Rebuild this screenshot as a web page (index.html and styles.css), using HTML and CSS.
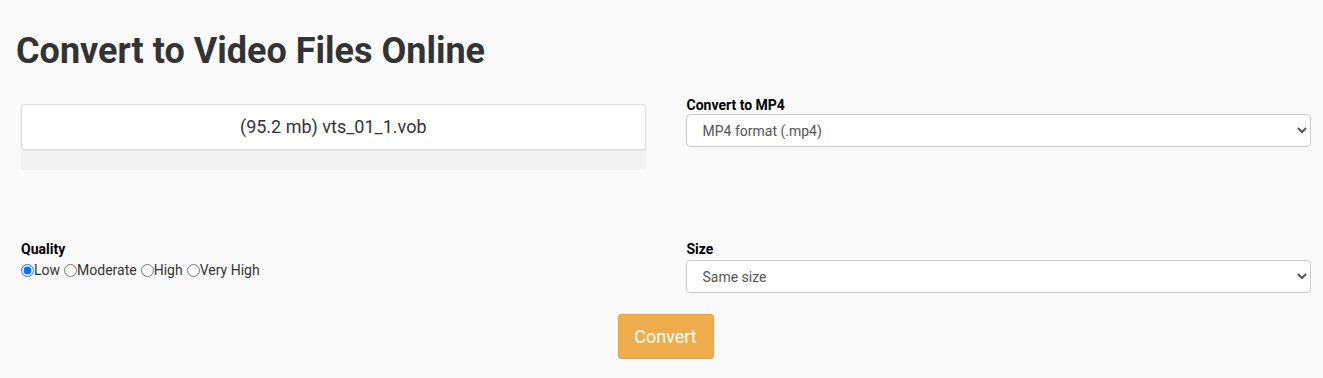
FILE: index.html
```html
<!DOCTYPE html>
<html lang="en">
<head>
  <meta charset="UTF-8" />
  <meta name="viewport" content="width=device-width, initial-scale=1" />
  <title>Convert to Video Files Online</title>
  <link rel="stylesheet" href="styles.css">
</head>
<body>
  <div class="page">
    <h1 class="title">Convert to Video Files Online</h1>

    <div class="grid">
      <!-- Upload file -->
      <div class="col col-file">
        <div class="file-box">(95.2 mb) vts_01_1.vob</div>
        <div class="progress"></div>
      </div>

      <div class="col">
        <label class="lbl" for="fmt">Convert to MP4</label>
        <select id="fmt" class="sel">
          <option>MP4 format (.mp4)</option>
        </select>
      </div>

      <!-- Options -->
      <div class="col col-opt">
        <div class="lbl">Quality</div>
        <div class="radios">
          <label><input type="radio" name="q" checked>Low</label>
          <label><input type="radio" name="q">Moderate</label>
          <label><input type="radio" name="q">High</label>
          <label><input type="radio" name="q">Very High</label>
        </div>
      </div>

      <div class="col col-opt">
        <label class="lbl" for="size">Size</label>
        <select id="size" class="sel">
          <option>Same size</option>
        </select>
      </div>
    </div>

    <div class="actions">
      <button class="btn">Convert</button>
    </div>
  </div>
</body>
</html>
```

FILE: styles.css
```css
body {
  margin: 0;
  background: #fafafa;
  font-family: Roboto, 'Liberation Sans', sans-serif;
  color: #333;
}
.page {
  padding: 0 12px 0 21px;
}
.title {
  margin: 0 0 0 -5px;
  padding-top: 31px;
  font-size: 36px;
  line-height: 41px;
  font-weight: 700;
  color: #333;
}

/* --- two columns --- */
.grid {
  display: grid;
  grid-template-columns: 1fr 1fr;
  column-gap: 41px;
  margin-top: 25px;
}
.col { display: flex; flex-direction: column; }
.col-file { padding-top: 7px; }
.col-opt { margin-top: 71px; }

.file-box {
  background: #fff;
  border: 1px solid #ddd;
  border-radius: 3px;
  box-shadow: 0 1px 2px rgba(0,0,0,0.12);
  height: 44px;
  line-height: 44px;
  text-align: center;
  font-size: 18px;
  color: #333;
}
.progress {
  height: 19px;
  margin-top: 1px;
  background: #f3f3f3;
  border-radius: 0 0 3px 3px;
}

.lbl {
  font-size: 14px;
  font-weight: 700;
  color: #000;
  line-height: 16px;
  margin-bottom: 1px;
}
.col-opt .lbl { margin-bottom: 3px; }
.sel {
  height: 33px;
  margin-left: -1px;
  padding: 0 10px 0 12px;
  font-family: inherit;
  font-size: 14px;
  color: #555;
  background: #fff;
  border: 1px solid #ccc;
  border-radius: 4px;
}

.radios {
  display: flex;
  font-size: 14px;
  color: #333;
  line-height: 16px;
  margin-top: 2px;
}
.radios label { display: flex; align-items: center; margin-right: 4px; }
.radios input {
  margin: 0;
  width: 13px; height: 13px;
}

/* --- convert button --- */
.actions {
  display: flex;
  justify-content: center;
  margin-top: 21px;
  padding-right: 1px;
}
.btn {
  background: #f0ad4e;
  color: #fff;
  border: 1px solid #eea236;
  border-radius: 3px;
  width: 96px;
  height: 45px;
  font-family: inherit;
  font-size: 18px;
  cursor: pointer;
}
```
